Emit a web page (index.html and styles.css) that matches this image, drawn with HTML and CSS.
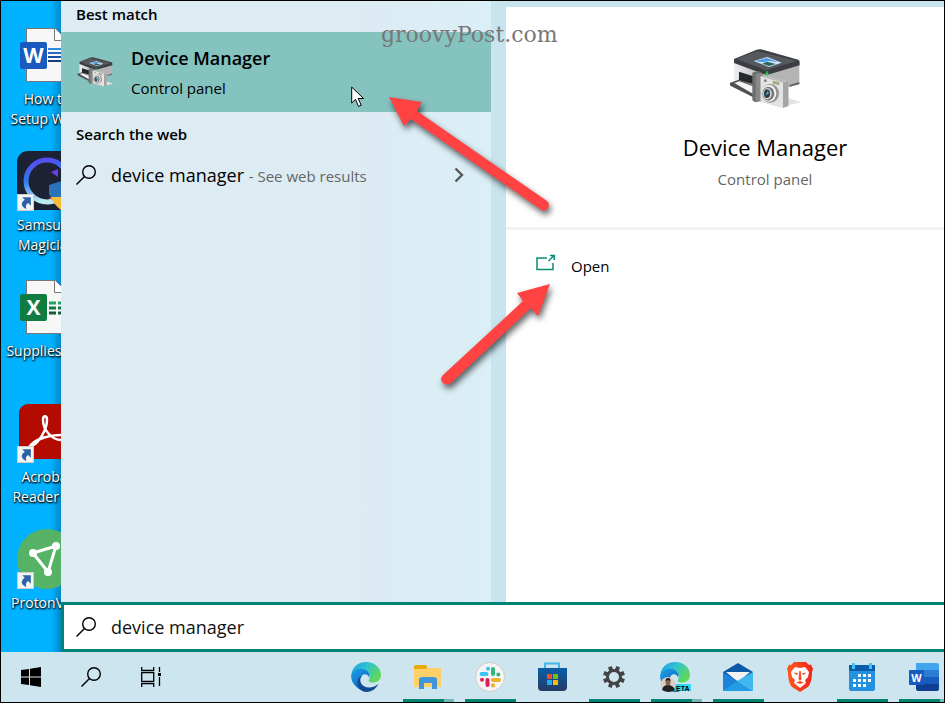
FILE: index.html
```
<!DOCTYPE html>
<html lang="en">
<head>
<meta charset="utf-8">
<title>Windows search</title>
<link rel="stylesheet" href="styles.css">
</head>
<body>
<svg class="defs" width="0" height="0" aria-hidden="true">
  <defs>
    <linearGradient id="gray" x1="0" y1="0" x2="1" y2="0"><stop offset="0" stop-color="#eee"/><stop offset="1" stop-color="#b2b2b2"/></linearGradient>
    <linearGradient id="edgeA" x1="0" y1="0" x2="1" y2="0.5"><stop offset="0" stop-color="#1b9de2"/><stop offset=".5" stop-color="#2fc3d1"/><stop offset="1" stop-color="#5fd85a"/></linearGradient>
    <linearGradient id="edgeB" x1="0" y1="0" x2="0.6" y2="1"><stop offset="0" stop-color="#1ca0e6"/><stop offset="1" stop-color="#0c62c0"/></linearGradient>
    <linearGradient id="store" x1="0" y1="0" x2="0" y2="1"><stop offset="0" stop-color="#0a5ea8"/><stop offset="1" stop-color="#243a66"/></linearGradient>
    <linearGradient id="ring" x1="0" y1="0" x2="0.2" y2="1"><stop offset="0" stop-color="#5946f0"/><stop offset=".5" stop-color="#2f7df0"/><stop offset="1" stop-color="#b9e8ef"/></linearGradient>
    <linearGradient id="brave" x1="0" y1="0" x2="1" y2="0"><stop offset="0" stop-color="#ff5a1c"/><stop offset="1" stop-color="#f0251c"/></linearGradient>
    <symbol id="device" viewBox="24 24 216 180">
      <path d="M180 198l60-14-40-14z" fill="#e4e4e4"/>
      <path d="M39 58l95 34v62l-95-24z" fill="url(#gray)"/>
      <path d="M134 92l101-22v58l-101 26z" fill="#b4b4b4"/>
      <path d="M205 132l30-9v7l-30 8z" fill="#666"/>
      <path d="M39 54l66-27q8-3 15-2l112 31q4 2 4 8v9l-96 28q-5 1-10-1L39 66z" fill="#3b3e43"/>
      <path d="M46 54l63-24 118 30-92 28z" fill="#55585d"/>
      <path d="M98 60l41-12 43 17-38 13z" fill="#cfe4f4"/>
      <path d="M103 60l35-9 32 12-25-3-20 4z" fill="#4d9be4"/>
      <path d="M124 68l14-6 26 7-20 6z" fill="#28645c"/>
      <path d="M54 92l48 15v24l-48-13z" fill="#25282b"/>
      <path d="M26 126l27-10 50 19v37L28 134z" fill="#4d4f51"/>
      <path d="M40 126l15-5 47 17v24z" fill="#f4f4f4"/>
      <path d="M94 95l18-5 13 7v82l-22 5-9-6z" fill="#6d6d6d"/>
      <path d="M104 98l19-2v82l-19 5z" fill="#888"/>
      <path d="M119 106l20-5 63 20v74l-17 5-66-18z" fill="#bbb"/>
      <path d="M119 106l67 19v75l-67-18z" fill="#e3e3e3"/>
      <path d="M186 125l16-4v74l-16 5z" fill="#a4a4a4"/>
      <path d="M155 119l20 5v9l-20-5z" fill="#a4aa84"/>
      <circle cx="133" cy="119" r="4" fill="#777"/>
      <ellipse cx="148" cy="157" rx="26" ry="28" fill="#929292"/>
      <ellipse cx="144" cy="157" rx="22" ry="25" fill="#f5f5f5"/>
      <ellipse cx="142" cy="158" rx="18" ry="21" fill="#777"/>
      <ellipse cx="139" cy="158" rx="13" ry="17" fill="#dadada"/>
      <ellipse cx="138" cy="158" rx="9" ry="13" fill="#273f46"/>
      <path d="M134 163l7-15 2 10z" fill="#53b9c9"/>
      <path d="M138 91v13m-5-6h10" stroke="#31d04a" stroke-width="4"/>
    </symbol>
    <symbol id="lens" viewBox="0 0 20 20">
      <circle cx="13" cy="7" r="6.3" fill="none" stroke="currentColor" stroke-width="1.4"/>
      <path d="M8.500 11.500L.5 19.500" stroke="currentColor" stroke-width="1.4"/>
    </symbol>
    <symbol id="shortcut" viewBox="0 0 16 16">
      <path d="M.5.5h15v15H.5z" fill="#f4f4f4" stroke="#cfcfcf"/>
      <path d="M5 3h8v8l-2.500-2.500C8.500 9.500 8 11 8.800 14 4.500 12.500 2.500 8.500 7.300 5.300z" fill="#2b62a8"/>
    </symbol>
    <symbol id="edge" viewBox="0 0 30 30">
      <path d="M.4 12C2 4 8 0 15 0c9 0 15 6 15 13 0 5-4 7.500-8 7.500-3.500 0-5-1.200-4-2.700 2.500-4-.5-8-6-8C6 9.800 2 12 .4 15z" fill="url(#edgeA)"/>
      <path d="M.3 13.500C2 8 7 6 11.500 7c5 .8 8 4.500 6.500 8.500-.6-2.800-4-4.500-7-2-4 3.500-2.500 10.500 4 14.500-2 2.500-8-1-11-4.500C1 20 0 17 .3 13.500z" fill="url(#edgeB)"/>
      <path d="M11 13.500c-4 5-.5 11.500 6 12 4.500.3 8-1.500 10.500-3.500C25 27 20 30 15.500 30 9 30 5 23 7 18c1-2.500 2.500-4 4-4.500z" fill="#114a91"/>
    </symbol>
  </defs>
</svg>

<div class="screen">
  <main class="workspace">
    <nav class="desktop" aria-label="Desktop">
      <a class="item" href="#">
        <svg viewBox="0 0 60 60"><path d="M9.500 3.500h29l8 8v45h-37z" fill="#f7f7f7" stroke="#777"/><path d="M37.500 3.500v12h10" fill="#fff" stroke="#777"/><g stroke-width="2"><path d="M31 24h13" stroke="#2b8ade"/><path d="M31 28h13" stroke="#2569c4"/><path d="M31 32h13" stroke="#174ea6"/><path d="M31 36h13" stroke="#183c7a"/></g><rect x="3" y="17" width="27" height="27" rx="2" fill="#185abd"/><text x="16.500" y="38" class="letter">W</text></svg>
        <span>How to<br>Setup Wi-Fi</span>
      </a>
      <a class="item" href="#">
        <svg viewBox="0 0 60 60"><rect width="60" height="59" rx="11" fill="#1c2233"/><circle cx="30" cy="30" r="21" fill="none" stroke="url(#ring)" stroke-width="5"/><path d="M34 21l7-3v8z" fill="#6a3fe8"/><path d="M31 47l12 4v-7z" fill="#e8415f"/><path d="M32 34l13-4v25q-10-5-13-12z" fill="#2a73b8"/><path d="M34 46h20v13H44q-7-5-10-13z" fill="#f5bd38"/><use href="#shortcut" x="0" y="43" width="17" height="17"/></svg>
        <span>Samsung<br>Magician</span>
      </a>
      <a class="item" href="#">
        <svg viewBox="0 0 60 60"><path d="M9.500 3.500h29l8 8v45h-37z" fill="#f7f7f7" stroke="#777"/><path d="M37.500 3.500v12h10" fill="#fff" stroke="#777"/><g stroke-width="3" stroke-dasharray="7 2"><path d="M32 26h12" stroke="#21a366"/><path d="M32 31h12" stroke="#107c41"/><path d="M32 36h12" stroke="#185c37"/></g><rect x="3" y="17" width="27" height="27" rx="2" fill="#107c41"/><text x="16.500" y="38" class="letter">X</text></svg>
        <span>Supplies List</span>
      </a>
      <a class="item" href="#">
        <svg viewBox="0 0 60 60"><rect x="2" y="1" width="56" height="55" rx="9" fill="#b30b00"/><path d="M14 43c8-2 16-17 16-26 0-5-4-5-4 0 0 10 9 20 18 20 6 0 5-5-1-5-11 0-22 4-27 8-4 3-5 6-2 5" fill="none" stroke="#fff" stroke-width="2.500"/><use href="#shortcut" x="0" y="43" width="17" height="17"/></svg>
        <span>Acrobat<br>Reader DC</span>
      </a>
      <a class="item" href="#">
        <svg viewBox="0 0 60 60"><circle cx="30" cy="30" r="30" fill="#56b366"/><path d="M16 24l23-7-8 26z" fill="none" stroke="#fff" stroke-width="3"/><g fill="#fff"><circle cx="16" cy="24" r="4"/><circle cx="39" cy="17" r="4"/><circle cx="31" cy="43" r="4"/></g><use href="#shortcut" x="0" y="43" width="17" height="17"/></svg>
        <span>ProtonVPN</span>
      </a>
    </nav>

    <section class="flyout">
      <div class="panes">
        <div class="results">
          <h2>Best match</h2>
          <a class="best" href="#">
            <svg class="device-small"><use href="#device"/></svg>
            <span class="best-text"><strong>Device Manager</strong><span>Control panel</span></span>
          </a>
          <h2 class="web-title">Search the web</h2>
          <a class="web" href="#">
            <svg class="lens"><use href="#lens"/></svg>
            <span class="query">device manager <small>- See web results</small></span>
            <svg class="chevron" viewBox="0 0 10 16"><path d="M1.500 1.500L8 8l-6.500 6.500" fill="none" stroke="#555" stroke-width="2.300"/></svg>
          </a>
        </div>
        <div class="details">
          <header>
            <svg class="device-large"><use href="#device"/></svg>
            <h1>Device Manager</h1>
            <p>Control panel</p>
          </header>
          <a class="open" href="#">
            <svg viewBox="0 0 20 24" fill="none" stroke="#0b8a78" stroke-width="1.500"><path d="M11 4H1v11.500h16V9"/><path d="M12.500 7L18 1.500M14 1.500h4.300V6"/></svg>
            <span>Open</span>
          </a>
        </div>
      </div>
      <form class="search">
        <label for="q" aria-label="Search"><svg class="lens"><use href="#lens"/></svg></label>
        <input id="q" type="text" value="device manager">
      </form>
    </section>
  </main>

  <footer class="taskbar">
    <div class="system">
      <button aria-label="Start"><svg width="20" height="20" viewBox="0 0 20 20"><path d="M0 3l8-1v7.500H0zM9 1.800L20 0v9.500H9zM0 10.500h8V18l-8-1zM9 10.500h11V20L9 18.200z"/></svg></button>
      <button aria-label="Search"><svg class="lens"><use href="#lens"/></svg></button>
      <button aria-label="Task view"><svg width="20" height="20" viewBox="0 0 20 20" fill="none" stroke="#000" stroke-width="1.300"><path d="M.7 0v3.500h12V0M.7 5.700h12v8.600H.7zM.7 20v-3.500h12V20M18.500 0v5M18.500 10v9"/><path d="M17 6h3v3h-3z" fill="#000" stroke="none"/></svg></button>
    </div>
    <div class="apps">
      <button aria-label="Edge"><svg width="30" height="30"><use href="#edge"/></svg></button>
      <button class="running multi" aria-label="File Explorer"><svg width="28" height="24" viewBox="0 0 28 24"><path d="M0 2q0-2 2-2h10l2 3h13v19H0z" fill="#ffd067"/><path d="M0 4V2q0-2 2-2h9q2 0 2 2t-2 2z" fill="#eca90c"/><path d="M5 24V15q0-3 3-3h12q3 0 3 3v9h-5v-6h-8v6z" fill="#3f94dc"/></svg></button>
      <button class="running" aria-label="Slack"><svg width="30" height="30" viewBox="0 0 30 30"><circle cx="15" cy="15" r="14.500" fill="#f6f4f4" stroke="#ccc"/><g stroke-width="4" stroke-linecap="round"><path d="M6.500 12h5M13 6.700v.1" stroke="#36c5f0"/><path d="M18 7v5M23.300 12.500v.1" stroke="#2eb67d"/><path d="M18 18h6M18 23.300v.1" stroke="#ecb22e"/><path d="M12.500 18v5M7 17.700v.1" stroke="#e01e5a"/></g></svg></button>
      <button aria-label="Microsoft Store"><svg width="30" height="30" viewBox="0 0 30 30"><path d="M8 7V1.500h14V7" fill="none" stroke="#42b7ea" stroke-width="2"/><path d="M1 6h29v19q0 4-4 4H5q-4 0-4-4z" fill="url(#store)"/><path d="M10 12h5v5h-5z" fill="#f25022"/><path d="M16 12h5v5h-5z" fill="#7fba00"/><path d="M10 18h5v5h-5z" fill="#24a9ec"/><path d="M16 18h5v5h-5z" fill="#ffb900"/></svg></button>
      <button class="running" aria-label="Settings"><svg width="22" height="22" viewBox="-11 -11 22 22"><g stroke="#444" stroke-width="4"><path d="M0-11v4M0 11V7M-11 0h4M11 0H7M-7.800-7.800l3 3M7.800 7.800l-3-3M-7.800 7.800l3-3M7.800-7.800l-3 3" transform="rotate(22.500)"/></g><circle r="6.500" fill="none" stroke="#444" stroke-width="3"/></svg></button>
      <button class="running multi" aria-label="Edge Beta"><svg width="32" height="30" viewBox="0 0 32 30"><use href="#edge" x="0" y="0" width="30" height="30"/><path d="M13 22h18v7H13z" fill="#31d8f5"/><text x="16" y="28.500" class="beta">ETA</text><circle cx="8" cy="22.500" r="7.500" fill="#d8cfc9"/><path d="M2 28q1-5 6-5t7 5q-6 4-13 0z" fill="#202126"/><ellipse cx="8" cy="20" rx="2.500" ry="3.500" fill="#8b6049"/><path d="M5.500 19q0-3 2.500-3t2.500 3l-2.500-1z" fill="#222"/></svg></button>
      <button class="running" aria-label="Mail"><svg width="30" height="28" viewBox="0 0 30 28"><path d="M0 9l15-9 15 9v9H0z" fill="#0f58a8"/><path d="M3 9h24L15 19z" fill="#f3f3f3"/><path d="M0 9l16 10-16 9z" fill="#1b83d8"/><path d="M30 9v19L14 18z" fill="#3fb8ef"/><path d="M0 28l14-10 16 10z" fill="#239be6"/></svg></button>
      <button aria-label="Brave"><svg width="26" height="30" viewBox="0 0 26 30"><path d="M7 0h12l3 3 2-.5L26 7l-1 3c0 8-2 13-4 15l-8 5-8-5C3 23 1 18 1 10L0 7l2-4.500L4 3z" fill="url(#brave)"/><path d="M8 5l5 1 5-1 4 5-1 5-3 3 1 3-6 5-6-5 1-3-3-3-1-5z" fill="#fff"/><path d="M6.500 10.500l5 1-2 1.500zM19.500 10.500l-5 1 2 1.500zM12.300 9h1.400l.8 8-1.500 2-1.500-2zM9 20.500l4-1.500 4 1.500-4 1.500z" fill="#fb4b20"/></svg></button>
      <button class="running" aria-label="Calendar"><svg width="26" height="28" viewBox="0 0 26 28"><path d="M0 2h26v7H0z" fill="#0c5cad"/><path d="M0 8h26v18q0 2-2 2H2q-2 0-2-2z" fill="#2491e0"/><path d="M4.500 0v6M21.500 0v6" stroke="#45c2f3" stroke-width="3"/><g stroke="#fff" stroke-width="3" stroke-dasharray="3 2"><path d="M9 12.500h13M4 17.500h18M4 22.500h13"/></g></svg></button>
      <button class="running multi" aria-label="Word"><svg width="30" height="28" viewBox="0 0 30 28"><path d="M7 0h20q3 0 3 2v5H7z" fill="#41a5ee"/><path d="M7 7h23v7H7z" fill="#2b7cd3"/><path d="M7 14h23v7H7z" fill="#185abd"/><path d="M7 21h23v5q0 2-2 2H9q-2 0-2-2z" fill="#103f91"/><rect y="7" width="15" height="15" rx="1" fill="#185abd"/><text x="7.500" y="18.500" class="mini">W</text></svg></button>
    </div>
  </footer>

  <div class="watermark">groovyPost.com</div>
  <svg class="pointer" width="14" height="22" viewBox="0 0 14 22"><path d="M.7 1v16l3.800-3.600 3 7 2.700-1.200-3-6.700h5.300z" fill="#fff" stroke="#000"/></svg>
  <svg class="arrows" width="170" height="310" viewBox="385 85 170 310">
    <g class="arrow"><path d="M389 97l33 5-5 9L547 201q4 4 0 8-3 3-7 0L411 119l-7 7z"/></g>
    <g class="arrow"><path d="M550 284l-12 32-7-8-80 75q-4 3-8 0-4-4 0-8l80-74-6-8z"/></g>
  </svg>
</div>
</body>
</html>
```
FILE: styles.css
```
* { box-sizing: border-box; }

body {
  margin: 0;
  font-family: "Open Sans", "Noto Sans", sans-serif;
  font-size: 15px;
  line-height: 20px;
  color: #000;
}

a { color: inherit; text-decoration: none; }
h1, h2, p { margin: 0; font-weight: 400; }
svg { display: block; flex: none; }
button { border: 0; padding: 0; background: none; }

.defs { position: absolute; }

.screen {
  position: relative;
  display: flex;
  flex-direction: column;
  min-height: 100vh;
  border: 1px solid #000;
  overflow: hidden;
}

.workspace {
  flex: 1;
  display: grid;
  grid-template-columns: 60px minmax(0, 1fr);
}

.desktop {
  overflow: hidden;
  padding-top: 24px;
  background: linear-gradient(90deg, transparent 50px, #0088c8 60px), #00b2ff;
}

.item {
  display: flex;
  flex-direction: column;
  align-items: center;
  gap: 4px;
  width: 92px;
  height: 126px;
  font-size: 14px;
  text-align: center;
  white-space: nowrap;
  color: #fff;
  text-shadow: 1px 1px 2px #000, 0 1px 2px #000;
}
.item:last-child { height: 84px; }
.item svg { width: 60px; height: 60px; text-shadow: none; }

.letter { font-size: 21px; font-weight: 700; fill: #fff; text-anchor: middle; }
.beta { font-size: 7px; font-weight: 700; }
.mini { font-size: 11px; font-weight: 700; fill: #fff; text-anchor: middle; }

.flyout { display: flex; flex-direction: column; }

.panes {
  flex: 1;
  display: grid;
  grid-template-columns: 430px minmax(0, 1fr);
  column-gap: 15px;
  background: #c8e4ef;
}

.results { background: linear-gradient(90deg, #ddebf3 70%, #daeff7); }

h2 { padding: 3px 15px 8px; font-size: 15px; line-height: 20px; font-weight: 600; }

.best {
  display: flex;
  align-items: center;
  gap: 18px;
  height: 80px;
  padding-left: 16px;
  background: #85c3bf;
}
.device-small { width: 36px; height: 30px; }
.best-text { display: grid; gap: 10px; padding-top: 2px; }
.best-text strong { font-size: 18px; font-weight: 600; }

h2.web-title { padding: 12px 15px 8px; }

.web {
  display: flex;
  align-items: center;
  gap: 15px;
  height: 46px;
  padding: 0 27px 0 15px;
}
.lens { width: 20px; height: 20px; }
.query { flex: 1; font-size: 18px; }
.query small { font-size: 15px; color: #666; }
.chevron { width: 10px; height: 16px; }

.details { margin-top: 6px; background: #fff; }

.details header {
  display: flex;
  flex-direction: column;
  align-items: center;
  height: 223px;
  padding: 42px 0 0 80px;
  border-bottom: 3px solid #f2f2f2;
}
.device-large { width: 72px; height: 60px; }
.details h1 { margin-top: 24px; font-size: 22px; line-height: 28px; }
.details p { margin-top: 8px; color: #666; }

.open { display: flex; align-items: center; gap: 15px; padding: 24px 30px; }
.open svg { width: 20px; height: 24px; }

.search {
  display: flex;
  align-items: center;
  gap: 15px;
  height: 50px;
  padding-left: 12px;
  border: 3px solid #008575;
  border-right: 0;
  background: #fff;
}
.search input {
  flex: 1;
  min-width: 0;
  height: 32px;
  border: 0;
  outline: 0;
  padding: 0;
  font: inherit;
  font-size: 18px;
  line-height: 28px;
  color: #111;
}

.taskbar { display: flex; height: 50px; background: #cde5ee; overflow: hidden; }
.system, .apps { display: flex; }
.system button { display: grid; place-items: center; width: 60px; }
.apps { margin-left: 154px; }
.apps button { position: relative; display: grid; place-items: center; width: 62px; flex: none; }
.running::after {
  content: "";
  position: absolute;
  left: 6px;
  bottom: 0;
  width: 51px;
  height: 3px;
  background: #008575;
}
.multi::after { background: linear-gradient(90deg, #008575 41px, #74b7b2 41px); }

.watermark {
  position: absolute;
  left: 380px;
  top: 20px;
  font-family: "DejaVu Serif", serif;
  font-size: 22px;
  line-height: 28px;
  color: #777;
}
.pointer { position: absolute; left: 350px; top: 85px; }
.arrows { position: absolute; left: 384px; top: 84px; overflow: visible; }
.arrow { fill: #ff4343; filter: drop-shadow(2px 4px 3px rgba(0, 0, 0, 0.6)); }
```
